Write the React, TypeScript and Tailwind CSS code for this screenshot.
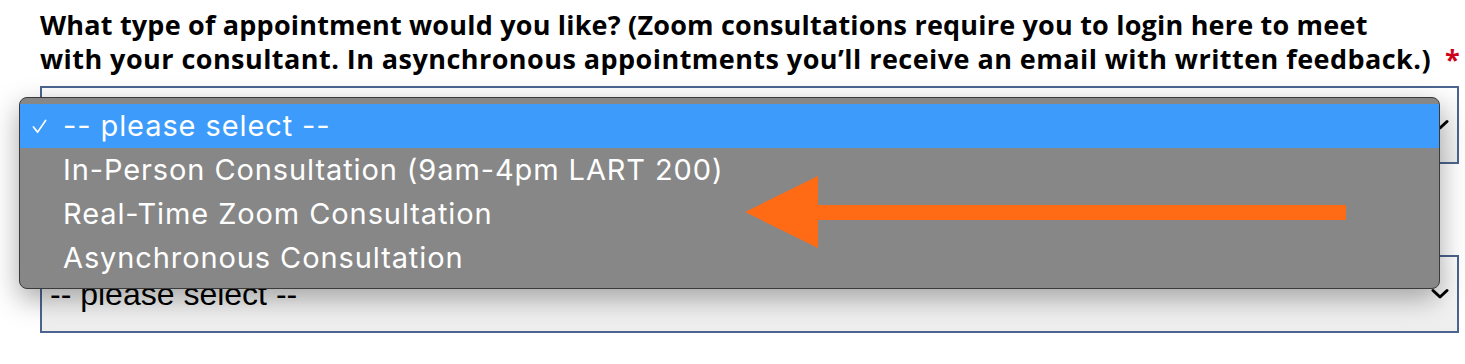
import React from "react";

const options = [
  "-- please select --",
  "In-Person Consultation (9am-4pm LART 200)",
  "Real-Time Zoom Consultation",
  "Asynchronous Consultation",
];

function Chevron({ className }: { className?: string }) {
  return (
    <svg viewBox="0 0 18 12" className={className} fill="none">
      <path d="M2 2.5 L9 9 L16 2.5" stroke="#000" strokeWidth="3" strokeLinecap="round" strokeLinejoin="round" />
    </svg>
  );
}

function Check() {
  return (
    <svg viewBox="0 0 16 16" className="w-[15px] h-[15px]" fill="none">
      <path d="M1.5 8.5 L6 14 L14.5 1.5" stroke="#fff" strokeWidth="1.8" strokeLinecap="round" strokeLinejoin="round" />
    </svg>
  );
}

function SelectBox({ className }: { className?: string }) {
  return (
    <div
      className={`flex items-center justify-between h-[78px] border-2 border-[#4b6590] bg-gradient-to-b from-white to-[#eeeeee] pl-[8px] pr-[8px] ${className ?? ""}`}
    >
      <span className="text-[32px] text-black font-['Liberation_Sans',Arial,sans-serif]">
        -- please select --
      </span>
      <Chevron className="w-[18px] h-[12px]" />
    </div>
  );
}

export default function App() {
  return (
    <div className="relative w-[1465px] h-[364px] bg-white overflow-hidden">
      <div className="flex flex-col pl-[40px] pr-[6px] pt-[8px]">
        <p className="text-[27px] leading-[34px] font-bold text-black font-['Open_Sans',sans-serif] tracking-[0.2px] whitespace-nowrap">
          What type of appointment would you like? (Zoom consultations require you to login here to meet
          <br />
          <span className="tracking-[0.45px]">
            with your consultant. In asynchronous appointments you’ll receive an email with written feedback.)
          </span>
          <span className="ml-[14px] text-[#d0021b]">*</span>
        </p>
        <SelectBox className="mt-[10px]" />
        <SelectBox className="mt-[91px]" />
      </div>

      {/* open native-style dropdown */}
      <div className="absolute left-[19px] top-[97px] w-[1421px] h-[192px] flex flex-col rounded-[8px] border border-[#3a3a3a] bg-[#878787] pt-[6px] shadow-[0_10px_28px_rgba(0,0,0,0.35)] font-['Inter','Liberation_Sans',sans-serif] text-white">
        {options.map((o, i) => (
          <div
            key={o}
            className={`flex items-center h-[44px] text-[29px] tracking-[0.9px] ${
              i === 0 ? "bg-[#3d9bfc]" : ""
            }`}
          >
            <span className="flex w-[43px] pl-[12px]">{i === 0 && <Check />}</span>
            {o}
          </div>
        ))}
      </div>

      {/* annotation arrow */}
      <svg className="absolute left-[740px] top-[170px]" width="620" height="84" viewBox="0 0 620 84">
        <polygon points="5,42 78,6 78,78" fill="#ff6a14" />
        <rect x="76" y="35" width="530" height="15" fill="#ff6a14" />
      </svg>
    </div>
  );
}
